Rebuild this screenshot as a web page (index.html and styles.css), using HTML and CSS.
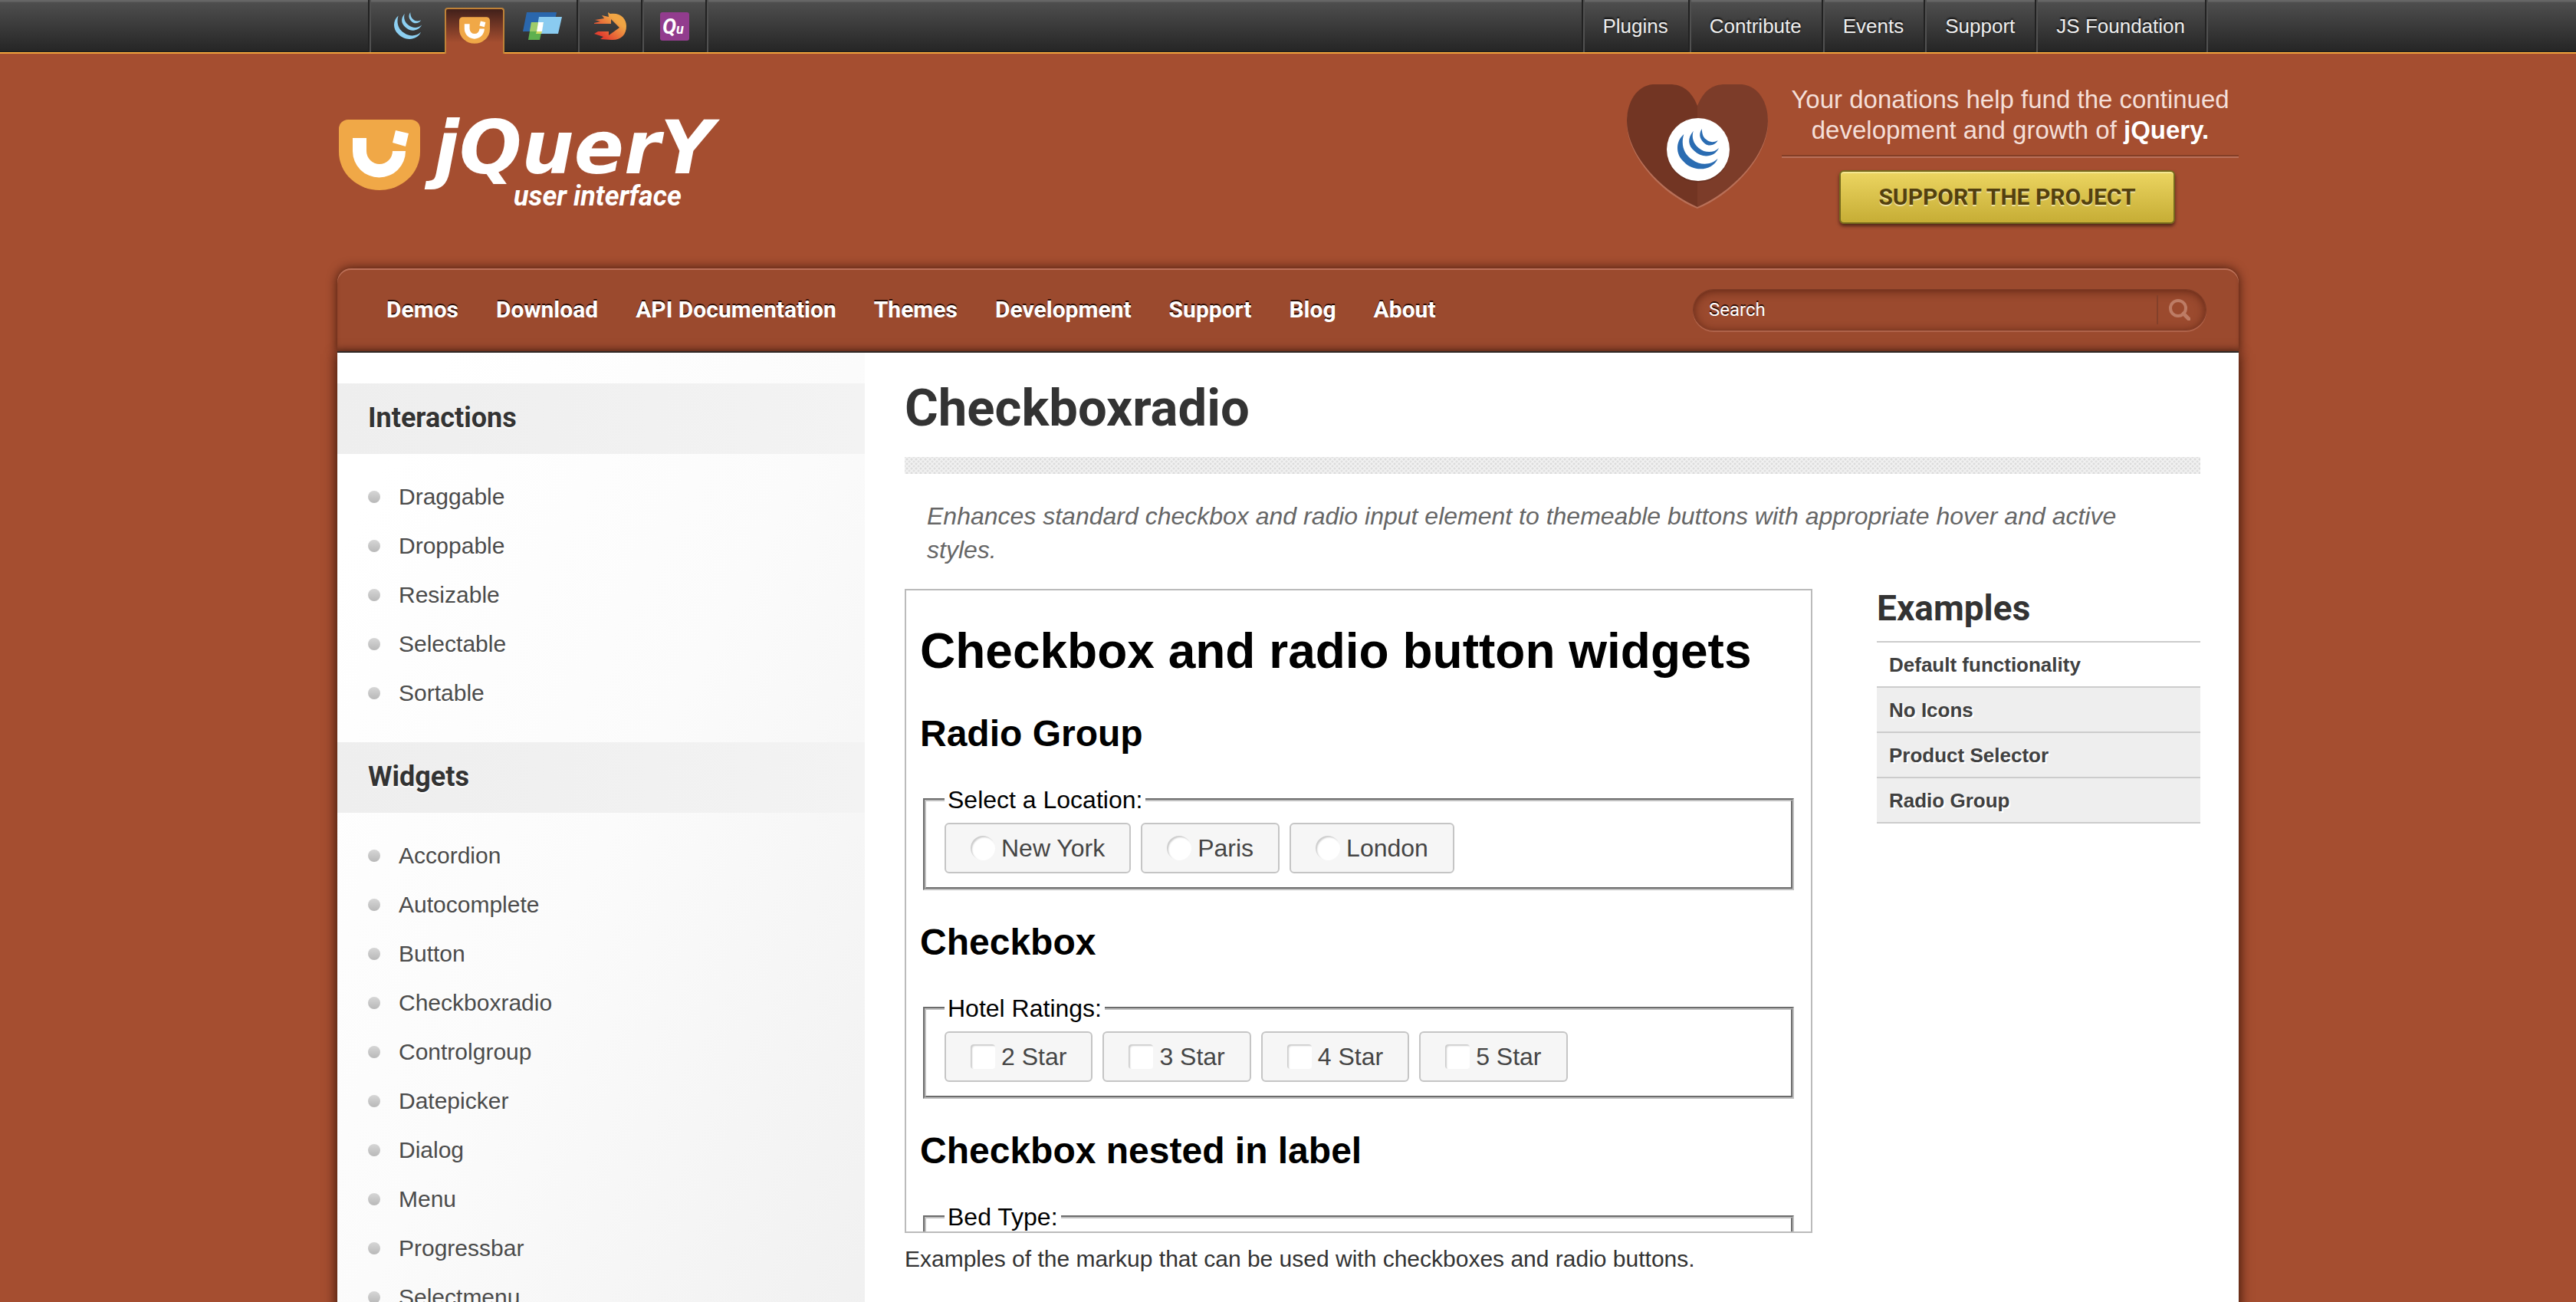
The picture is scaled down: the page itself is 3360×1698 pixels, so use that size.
FILE: index.html
```html
<!DOCTYPE html>
<html lang="en">
<head>
<meta charset="utf-8">
<title>Checkboxradio | jQuery UI</title>
<link rel="stylesheet" href="styles.css">
</head>
<body>
<svg class="defs" width="0" height="0" aria-hidden="true">
  <symbol id="swirl" viewBox="0 0 39 39">
    <path d="M6 5C-2 12-2 24 6 31C15 41 33 40 38 28C32 34 22 35 14 29C6 24 3 15 6 5Z"/>
    <path d="M15 2C9 9 10 16 16 21C23 28 35 27 39 18C34 23 26 23 20 18C15 14 13 8 15 2Z"/>
    <path d="M23 0C19 6 22 11 26 14C30 17 36 15 38 11C34 13 30 13 27 10C24 8 23 4 23 0Z"/>
  </symbol>
  <symbol id="shield" viewBox="0 0 106 92">
    <path fill="#f0a847" d="M12 0H94a12 12 0 0 1 12 12V42a53 50 0 0 1-106 0V12A12 12 0 0 1 12 0Z"/>
    <path fill="#fff" d="M18 24H36V41a17 17 0 0 0 34 0H87a34 34 0 0 1-69 0ZM74 14L91 18L87 35L70 30Z"/>
  </symbol>
</svg>

<div class="topbar">
  <div class="wrap topbar-inner">
    <nav class="projects" aria-label="Projects">
      <a class="p-jquery" href="#" aria-label="jQuery"><svg width="38" height="36" preserveAspectRatio="none" fill="#8dd0f2"><use href="#swirl"/></svg></a>
      <a class="p-ui active" href="#" aria-label="jQuery UI"><svg width="40" height="35"><use href="#shield"/></svg></a>
      <a class="p-mobile" href="#" aria-label="jQuery Mobile"><svg width="51" height="37" viewBox="0 0 51 37">
        <path fill="#2a67ad" d="M5 0H44L39 25H0Z"/><path fill="#8acbf0" d="M21 6H51L46 28H17Z"/>
        <path fill="#5fb04f" d="M11 13H27L22 36H7Z"/><path fill="#9fcb6a" d="M11 13H20L18 25H9Z"/>
        <path fill="#fff" d="M20 13H27L25 25H18Z"/><path fill="#d3da62" d="M18 25H25L24 28H17Z"/></svg></a>
      <a class="p-narrow" href="#" aria-label="Sizzle"><svg width="42" height="37" viewBox="0 0 42 37">
        <defs><linearGradient id="flame" x1="1" y1="0" x2="0" y2="1"><stop offset=".3" stop-color="#f0a544"/><stop offset=".8" stop-color="#e2402f"/></linearGradient></defs>
        <path fill="url(#flame)" d="M0 14L8 12L1 10L13 8L10 4L19 6L18 0L21 2C34 0 42 8 42 18C42 30 34 37 22 36L8 35L12 32L0 28L5 25H19V30L33 20L22 9V15H0Z"/></svg></a>
      <a class="p-narrow last" href="#" aria-label="QUnit"><svg width="38" height="37" viewBox="0 0 38 37">
        <rect width="38" height="37" rx="3" fill="#923c8e"/>
        <text class="qunit" x="3" y="28"><tspan font-size="27">Q</tspan><tspan font-size="18">u</tspan></text></svg></a>
    </nav>
    <nav class="global-links" aria-label="Foundation">
      <a href="#">Plugins</a><a href="#">Contribute</a><a href="#">Events</a><a href="#">Support</a><a class="last" href="#">JS Foundation</a>
    </nav>
  </div>
</div>

<div class="wrap">
  <header class="masthead">
    <a class="logo" href="#">
      <svg width="106" height="92" aria-hidden="true"><use href="#shield"/></svg>
      <span class="logo-words"><span class="logo-name">jQuer<span class="cap">y</span></span><span class="logo-sub">user interface</span></span>
    </a>
    <aside class="donate">
      <svg class="heart" width="184" height="162" viewBox="0 0 184 162" aria-hidden="true">
        <path fill="#b97058" d="M92 30C82 8 70 2 56 2C12 2 0 26 0 50C0 94 46 144 92 162C138 144 184 94 184 50C184 26 172 2 128 2C114 2 102 8 92 30Z"/>
        <path fill="#723523" d="M92 28C84 8 72 0 56 0H34C12 2 0 24 0 48C0 92 46 140 92 160Z"/>
        <path fill="#7c3c29" d="M92 28C100 8 112 0 128 0H150C172 2 184 24 184 48C184 92 138 140 92 160Z"/>
        <circle cx="93" cy="87" r="41" fill="#5c2a1b" opacity=".5"/><circle cx="93" cy="85" r="41" fill="#fff"/>
        <svg x="66" y="58" width="54" height="54" fill="#2a6cb2"><use href="#swirl"/></svg>
      </svg>
      <div class="donate-body">
        <p>Your donations help fund the continued<br>development and growth of <strong>jQuery.</strong></p>
        <a class="support" href="#">Support the project</a>
      </div>
    </aside>
  </header>

  <div class="mainnav">
    <nav aria-label="Main">
      <a href="#">Demos</a><a href="#">Download</a><a href="#">API Documentation</a><a href="#">Themes</a><a href="#">Development</a><a href="#">Support</a><a href="#">Blog</a><a href="#">About</a>
    </nav>
    <form class="search">
      <input type="text" placeholder="Search" aria-label="Search">
      <button type="button" aria-label="Search"><svg width="28" height="28" viewBox="0 0 28 28" fill="none" stroke="#bd7c65"><circle cx="12" cy="12" r="10" stroke-width="4"/><path d="M19 19L26 26" stroke-width="5" stroke-linecap="round"/></svg></button>
    </form>
  </div>

  <div class="page">
    <aside class="sidebar">
      <h2>Interactions</h2>
      <ul>
        <li><a href="#">Draggable</a></li><li><a href="#">Droppable</a></li><li><a href="#">Resizable</a></li><li><a href="#">Selectable</a></li><li><a href="#">Sortable</a></li>
      </ul>
      <h2>Widgets</h2>
      <ul>
        <li><a href="#">Accordion</a></li><li><a href="#">Autocomplete</a></li><li><a href="#">Button</a></li><li><a href="#">Checkboxradio</a></li><li><a href="#">Controlgroup</a></li><li><a href="#">Datepicker</a></li><li><a href="#">Dialog</a></li><li><a href="#">Menu</a></li><li><a href="#">Progressbar</a></li><li><a href="#">Selectmenu</a></li>
      </ul>
    </aside>
    <main>
      <h1>Checkboxradio</h1>
      <div class="rule"></div>
      <p class="desc">Enhances standard checkbox and radio input element to themeable buttons with appropriate hover and active styles.</p>
      <div class="columns">
        <div>
          <section class="demo">
            <h2 class="demo-title">Checkbox and radio button widgets</h2>
            <h3>Radio Group</h3>
            <fieldset>
              <legend>Select a Location:</legend>
              <div class="options">
                <label><input type="radio" name="city">New York</label>
                <label><input type="radio" name="city">Paris</label>
                <label><input type="radio" name="city">London</label>
              </div>
            </fieldset>
            <h3>Checkbox</h3>
            <fieldset>
              <legend>Hotel Ratings:</legend>
              <div class="options">
                <label><input type="checkbox">2 Star</label>
                <label><input type="checkbox">3 Star</label>
                <label><input type="checkbox">4 Star</label>
                <label><input type="checkbox">5 Star</label>
              </div>
            </fieldset>
            <h3>Checkbox nested in label</h3>
            <fieldset>
              <legend>Bed Type:</legend>
              <div class="options"></div>
            </fieldset>
          </section>
          <p class="note">Examples of the markup that can be used with checkboxes and radio buttons.</p>
        </div>
        <aside class="examples">
          <h2>Examples</h2>
          <ul>
            <li class="current"><a href="#">Default functionality</a></li>
            <li><a href="#">No Icons</a></li>
            <li><a href="#">Product Selector</a></li>
            <li><a href="#">Radio Group</a></li>
          </ul>
        </aside>
      </div>
    </main>
  </div>
</div>
</body>
</html>
```
FILE: styles.css
```css
* { box-sizing: border-box; }
html { background: #a54e30; }
body {
  margin: 0;
  height: 100vh;
  overflow: hidden;
  font: 30px/44px "Liberation Sans", Arial, sans-serif;
  color: #333;
}
a { color: inherit; text-decoration: none; }
h1, h2, h3, p, ul { margin: 0; padding: 0; }
ul { list-style: none; }
.defs { position: absolute; }
.wrap { width: calc(100% - 80px); max-width: 2480px; margin: 0 auto; }

/* Top bar */
.topbar {
  height: 70px;
  border-bottom: 2px solid #f0a33c;
  background: linear-gradient(#666 0, #666 2px, #4e4e4e 3px, #262626 66px, #1a1a1a);
}
.topbar-inner { display: flex; justify-content: space-between; padding: 0 40px; }
.projects, .global-links { display: flex; height: 68px; }
.projects a, .global-links a {
  display: flex;
  align-items: center;
  justify-content: center;
  border-left: 2px solid #222;
  box-shadow: inset 2px 0 #505050;
}
.projects .last, .global-links .last { border-right: 2px solid #222; box-shadow: inset 2px 0 #505050, 2px 0 #505050; }
.projects .p-jquery { width: 100px; padding-left: 2px; }
.projects .p-ui { width: 78px; }
.projects .p-mobile { width: 94px; padding-left: 4px; border-left: 0; box-shadow: none; }
.projects .p-narrow { width: 84px; padding-left: 2px; }
.projects .last { width: 86px; }
.projects .active {
  height: 60px;
  margin: 10px 0 -2px;
  padding-bottom: 4px;
  border: 2px solid #bf8237;
  border-bottom: 0;
  border-radius: 4px 4px 0 0;
  box-shadow: none;
  background: linear-gradient(#41201a, #a54e30 75%);
}
.qunit { font-family: Roboto, sans-serif; font-weight: 700; font-style: italic; fill: #fff; }
.global-links { margin-right: 2px; }
.global-links a { padding: 0 26px; font-size: 26px; color: #eee; text-shadow: 0 -2px 2px #111; }

/* Masthead */
.masthead { display: flex; justify-content: space-between; height: 280px; }
.logo { display: flex; gap: 18px; padding: 86px 0 0 2px; color: #fff; }
.logo-words { display: flex; flex-direction: column; }
.logo-name { font: italic 700 96px/84px "DejaVu Sans", sans-serif; margin-top: -5px; }
.logo-name .cap { text-transform: uppercase; }
.logo-sub { font: italic 700 36px/42px Roboto, sans-serif; margin-left: 104px; }
.donate { display: flex; gap: 18px; padding-top: 40px; }
.donate-body { width: 596px; text-align: center; color: #f4dfd8; font-size: 33px; line-height: 40px; }
.donate-body p { padding-bottom: 14px; border-bottom: 2px solid #b9705a; box-shadow: inset 0 -2px #843e26; }
.donate-body strong { color: #fff; }
.support {
  display: block;
  width: 438px;
  margin: 16px 0 0 75px;
  border: 2px solid #75691c;
  border-radius: 6px;
  background: linear-gradient(#ecd561, #c6ad35);
  box-shadow: inset 0 2px #f4e691, 0 3px 4px rgba(0, 0, 0, .5);
  font: 700 30px/66px Roboto, sans-serif;
  text-transform: uppercase;
  color: #53400f;
  text-shadow: 0 2px #ece0a0;
}

/* Main navigation */
.mainnav {
  display: flex;
  align-items: center;
  justify-content: space-between;
  height: 110px;
  padding: 0 42px 0 64px;
  border-bottom: 2px solid #333;
  border-radius: 18px 18px 0 0;
  background: #9b4a2e;
  box-shadow: inset 0 2px #bc7159, inset 0 -6px 8px -4px rgba(0, 0, 0, .3), 0 0 14px rgba(40, 10, 0, .8);
}
.mainnav nav { display: flex; gap: 49px; font: 700 30px/40px Roboto, sans-serif; color: #fff; text-shadow: 0 -2px rgba(30, 5, 0, .9); }
.search {
  display: flex;
  align-items: center;
  width: 670px;
  height: 54px;
  border-radius: 27px;
  border: 1px solid #7d3a25;
  box-shadow: inset 0 2px 12px rgba(60, 15, 5, .6), 0 2px #b0634a;
}
.search input { flex: 1; min-width: 0; height: 40px; padding: 0 20px; border: 0; background: none; outline: 0; font: 24px/40px Roboto, sans-serif; color: #fff; text-shadow: 0 -2px rgba(30, 5, 0, .9); }
.search input::placeholder { color: #fff; opacity: 1; }
.search button { display: flex; align-items: center; height: 38px; padding: 0 20px 0 14px; border: 0; border-left: 2px solid #83402a; background: none; }

/* Page body */
.page { position: relative; display: grid; grid-template-columns: 688fr 1792fr; background: #fff; box-shadow: 0 4px 14px 2px rgba(40, 10, 0, .8); }
.sidebar { padding-top: 40px; background: linear-gradient(to bottom right, #fff 10%, #fbfbfb 50%, #f0f0f0); }
.sidebar h2 {
  padding: 0 0 2px 40px;
  background: linear-gradient(90deg, #eee, #f3f3f3);
  font: 700 36px/90px Roboto, sans-serif;
  text-shadow: 0 2px #fff;
}
.sidebar ul { padding: 24px 0 32px 40px; }
.sidebar li { display: flex; align-items: center; gap: 24px; height: 64px; color: #4b4b4b; }
.sidebar li::before { content: ""; width: 16px; height: 16px; border-radius: 50%; background: linear-gradient(#d6d6d6, #b8b8b8); }
main { padding: 32px 50px 0 52px; }
main h1 { font: 700 67px/80px Roboto, sans-serif; }
.rule {
  height: 22px;
  margin-top: 24px;
  background: radial-gradient(circle, #dcdcdc 1px, transparent 2px) 0 0 / 6px 6px, radial-gradient(circle, #dfdfdf 1px, transparent 2px) 3px 3px / 6px 6px, #f2f2f2;
}
.desc { padding: 33px 60px 29px 29px; font-size: 32px; font-style: italic; color: #666; }
.columns { display: grid; grid-template-columns: 1184fr 422fr; gap: 84px; align-items: start; }

/* Demo frame */
.demo { height: 840px; padding: 0 18px; border: 2px solid #bbb; overflow: hidden; color: #000; font-size: 32px; line-height: 36px; }
.demo-title { margin-top: 39px; font-size: 64px; line-height: 80px; }
.demo h3 { margin: 40px 0; font-size: 48px; line-height: 56px; }
.demo fieldset { margin: 0 4px; padding: 12px 24px 18px; border: 4px groove #c0c0c0; }
.demo legend { padding: 0 4px; }
.options { display: flex; gap: 13px; min-height: 66px; }
.options label { display: flex; align-items: center; gap: 8px; height: 66px; padding: 0 32px; border: 2px solid #c5c5c5; border-radius: 6px; background: #f6f6f6; color: #454545; }
.options input { appearance: none; width: 32px; height: 32px; margin: 0; background: #fff; border-radius: 4px; box-shadow: inset 2px 2px 2px #ccc; }
.options input[type="radio"] { border-radius: 50%; }
.note { padding-top: 12px; }

/* Examples list */
.examples h2 { padding-bottom: 18px; font: 700 46px/50px Roboto, sans-serif; border-bottom: 2px solid #ccc; }
.examples li { height: 59px; padding-left: 16px; border-bottom: 2px solid #ccc; background: #eee; font-weight: 700; font-size: 26px; line-height: 58px; color: #404040; text-shadow: 2px 2px #fff; }
.examples .current { background: #fff; }
```
